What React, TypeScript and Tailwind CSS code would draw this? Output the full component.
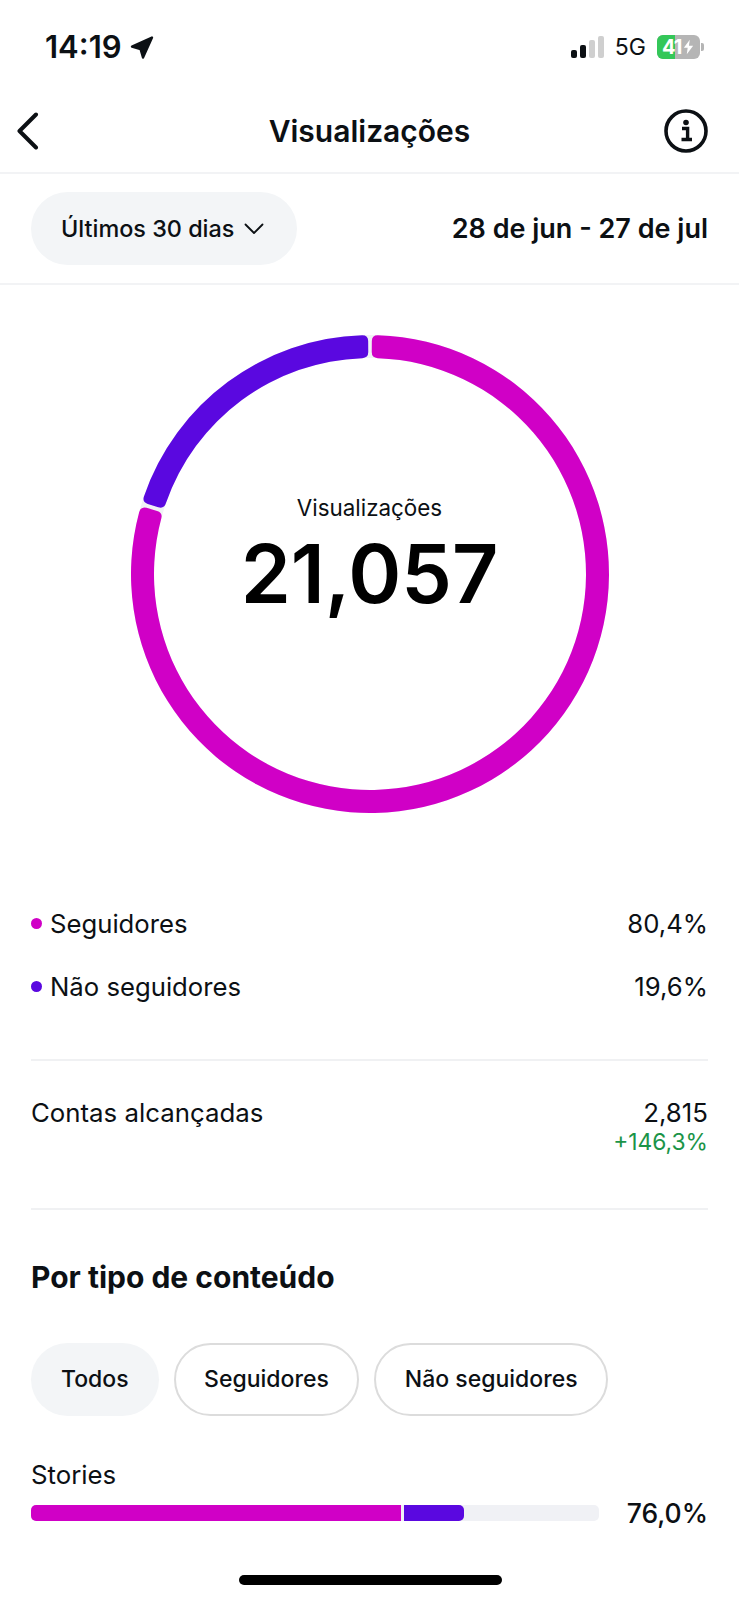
import React from 'react';

const FONT = 'font-[Inter,"Liberation_Sans",sans-serif]';

// angles in degrees, clockwise from the top of the ring
const polar = (r: number, deg: number) => {
    const rad = ((deg - 90) * Math.PI) / 180;
    return `${(239 + r * Math.cos(rad)).toFixed(2)} ${(239 + r * Math.sin(rad)).toFixed(2)}`;
};

const arcPath = (a0: number, a1: number) => {
    const ro = 239;
    const ri = 216;
    const c = 6;
    const dO = ((c / ro) * 180) / Math.PI;
    const dI = ((c / ri) * 180) / Math.PI;
    const large = a1 - a0 > 180 ? 1 : 0;
    return [
        `M ${polar(ro, a0 + dO)}`,
        `A ${ro} ${ro} 0 ${large} 1 ${polar(ro, a1 - dO)}`,
        `Q ${polar(ro, a1)} ${polar(ro - c, a1)}`,
        `L ${polar(ri + c, a1)}`,
        `Q ${polar(ri, a1)} ${polar(ri, a1 - dI)}`,
        `A ${ri} ${ri} 0 ${large} 0 ${polar(ri, a0 + dI)}`,
        `Q ${polar(ri, a0)} ${polar(ri + c, a0)}`,
        `L ${polar(ro - c, a0)}`,
        `Q ${polar(ro, a0)} ${polar(ro, a0 + dO)}`,
        'Z',
    ].join(' ');
};

const StatusBar = () => (
    <div className="flex h-[85px] items-start justify-between pl-[45px] pr-[35px] pt-[30px]">
        <div className="flex items-center gap-[8px]">
            <span className="text-[31px] leading-[34px] font-semibold">14:19</span>
            <svg width="24" height="23" viewBox="0 0 24 23" fill="#0c1014" stroke="#0c1014" strokeWidth="2.4" strokeLinejoin="round">
                <path d="M22 1.5 L2 10.5 L10.5 13 L13 21.5 Z" />
            </svg>
        </div>
        <div className="relative flex items-center">
            <div className="flex items-end gap-[3px]">
                <div className="h-[8px] w-[6px] rounded-[2px] bg-[#0c1014]" />
                <div className="h-[13px] w-[6px] rounded-[2px] bg-[#0c1014]" />
                <div className="h-[18px] w-[6px] rounded-[2px] bg-[#cfcfcf]" />
                <div className="h-[22px] w-[6px] rounded-[2px] bg-[#cfcfcf]" />
            </div>
            <span className="ml-[11px] text-[23px] leading-[34px] font-normal">5G</span>
            <div className="ml-[11px] flex h-[24px] w-[43px] overflow-hidden rounded-[6px] bg-[#b5b5b5]">
                <div className="h-full w-[18px] bg-[#34c759]" />
            </div>
            <div className="absolute right-[4px] top-[5px] flex h-[24px] w-[43px] items-center pl-[5px] text-[20px] leading-none font-bold tracking-[-1px] text-white">
                41
                <svg className="ml-[2px]" width="11" height="16" viewBox="0 0 13 17" fill="#ffffff">
                    <path d="M8 0 L1 9.5 L5.5 9.5 L4.5 17 L12 7 L7 7 Z" />
                </svg>
            </div>
            <div className="ml-[1px] h-[8px] w-[3px] rounded-r-[2px] bg-[#b5b5b5]" />
        </div>
    </div>
);

const Header = () => (
    <div className="flex h-[89px] items-center justify-between border-b-2 border-[#f2f3f5] pl-[16px] pr-[31px] pt-[5px]">
        <div className="w-[59px]">
            <svg width="24" height="38" viewBox="0 0 24 38" fill="none" stroke="#0c1014" strokeWidth="4" strokeLinecap="round" strokeLinejoin="round">
                <path d="M20 2.5 L3.5 19 L20 35.5" />
            </svg>
        </div>
        <h1 className="text-[30px] leading-none font-semibold">Visualizações</h1>
        <svg width="44" height="44" viewBox="0 0 44 44" fill="none">
            <circle cx="22" cy="22" r="20" stroke="#0c1014" strokeWidth="3.6" />
            <circle cx="22" cy="13.5" r="2.8" fill="#0c1014" />
            <path d="M18 19.5 H23.6 V30 M17.5 30.5 H28" stroke="#0c1014" strokeWidth="3.4" />
        </svg>
    </div>
);

const FilterRow = () => (
    <div className="flex h-[111px] items-center justify-between border-b-2 border-[#f2f3f5] px-[31px]">
        <div className="flex h-[73px] w-[266px] items-center gap-[10px] rounded-full bg-[#f3f5f7] pl-[30px]">
            <span className="text-[23.4px] leading-none font-medium">Últimos 30 dias</span>
            <svg width="20" height="12" viewBox="0 0 20 12" fill="none" stroke="#0c1014" strokeWidth="1.8" strokeLinecap="round" strokeLinejoin="round">
                <path d="M1.5 1.5 L10 10 L18.5 1.5" />
            </svg>
        </div>
        <span className="text-[27px] leading-none font-semibold">28 de jun - 27 de jul</span>
    </div>
);

const Donut = () => (
    <div className="mt-[50px] grid justify-center">
        <svg className="[grid-area:1/1]" width="478" height="478" viewBox="0 0 478 478">
            <circle cx="239" cy="239" r="227.5" fill="none" stroke="#f0f2f5" strokeWidth="23" />
            <path d={arcPath(0.45, 286.5)} fill="#d000c6" />
            <path d={arcPath(287.5, 359.55)} fill="#5a08e0" />
        </svg>
        <div className="flex flex-col items-center pt-[160px] [grid-area:1/1]">
            <span className="text-[22.4px] leading-[26px] font-normal">Visualizações</span>
            <span className="mt-[7px] text-[80.5px] leading-[92px] font-semibold text-black">21,057</span>
        </div>
    </div>
);

const LegendRow = ({ color, label, value }: { color: string; label: string; value: string }) => (
    <div className="flex h-[63px] items-center justify-between">
        <div className="flex items-center gap-[8px]">
            <div className={`h-[11px] w-[11px] rounded-full ${color}`} />
            <span className="text-[25.7px] leading-none font-normal">{label}</span>
        </div>
        <span className="text-[25.7px] leading-none font-normal">{value}</span>
    </div>
);

const Pill = ({ label, active }: { label: string; active?: boolean }) => (
    <div
        className={`flex h-[73px] items-center rounded-full text-[23px] leading-none font-[550] ${
            active ? 'bg-[#f3f5f7] px-[30px]' : 'border-2 border-[#dcdcdc] px-[28.5px]'
        }`}
    >
        {label}
    </div>
);

export default function App() {
    return (
        <div className={`relative h-[1600px] w-[739px] overflow-hidden bg-white text-[#0c1014] ${FONT}`}>
            <StatusBar />
            <Header />
            <FilterRow />
            <Donut />

            <div className="mt-[79px] px-[31px]">
                <LegendRow color="bg-[#d000c6]" label="Seguidores" value="80,4%" />
                <LegendRow color="bg-[#5a08e0]" label="Não seguidores" value="19,6%" />
            </div>

            <div className="mx-[31px] mt-[41px] border-t-2 border-[#f0f1f3]" />

            {/* Contas alcançadas */}
            <div className="flex items-start justify-between px-[31px] pt-[37px]">
                <span className="text-[25.8px] leading-[30px] font-normal">Contas alcançadas</span>
                <div className="flex flex-col items-end">
                    <span className="text-[25.8px] leading-[30px] font-normal">2,815</span>
                    <span className="text-[22.8px] leading-[28px] font-normal text-[#1b9448]">+146,3%</span>
                </div>
            </div>

            <div className="mx-[31px] mt-[52px] border-t-2 border-[#f0f1f3]" />

            <h2 className="mt-[49px] px-[31px] text-[30px] leading-[36px] font-bold">Por tipo de conteúdo</h2>

            <div className="mt-[48px] flex gap-[15px] px-[31px]">
                <Pill label="Todos" active />
                <Pill label="Seguidores" />
                <Pill label="Não seguidores" />
            </div>

            {/* Stories */}
            <div className="mt-[44px] px-[31px]">
                <div className="text-[25.8px] leading-[30px] font-normal">Stories</div>
                <div className="mt-[10px] flex items-center justify-between">
                    <div className="flex h-[16px] w-[568px] gap-[3px] overflow-hidden rounded-[5px] bg-[#f0f1f5]">
                        <div className="h-full w-[370px] bg-[#d000c6]" />
                        <div className="h-full w-[60px] rounded-r-[5px] bg-[#5a08e0]" />
                    </div>
                    <span className="text-[26.5px] leading-none font-medium">76,0%</span>
                </div>
            </div>

            <div className="absolute bottom-[15px] left-[239px] h-[10px] w-[263px] rounded-full bg-black" />
        </div>
    );
}
